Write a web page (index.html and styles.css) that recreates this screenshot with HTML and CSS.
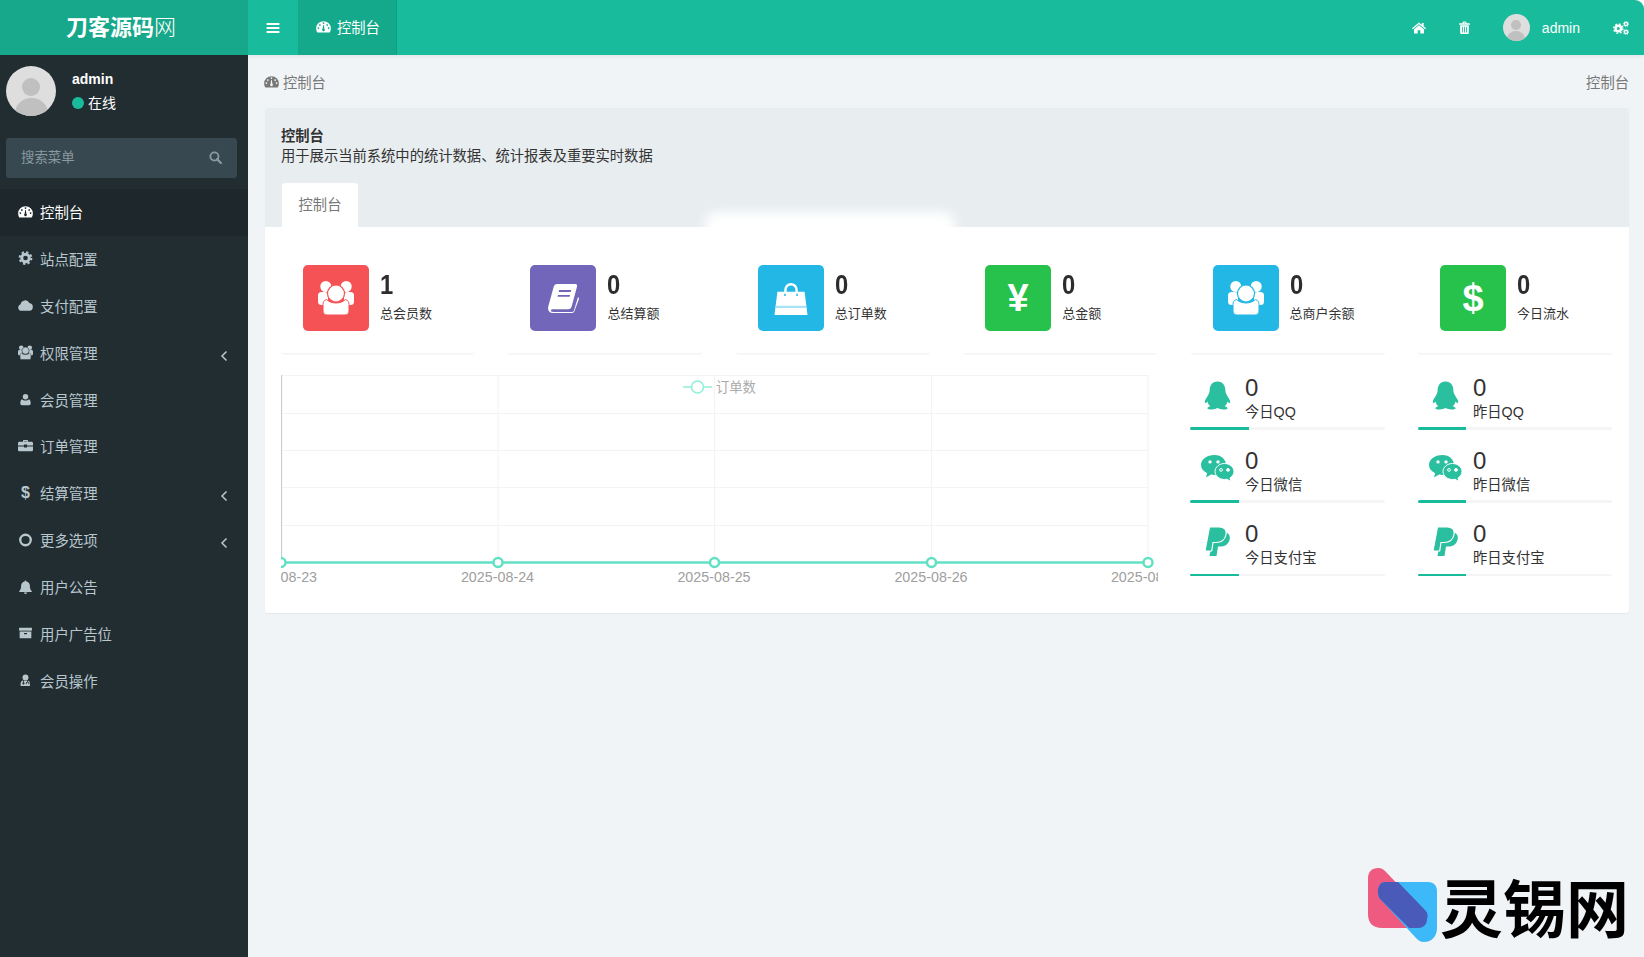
FILE: index.html
```html
<!DOCTYPE html>
<html lang="zh-CN">
<head>
<meta charset="utf-8">
<title>控制台</title>
<link rel="stylesheet" href="styles.css">
</head>
<body>
<svg class="sprite" xmlns="http://www.w3.org/2000/svg">
  <symbol id="i-dash" viewBox="0 0 24 24"><path fill-rule="evenodd" d="M12 3.500A11.800 11.800 0 0 0 .2 15.300c0 2.400.6 4.300 1.600 5.800.2.300.5.500.9.500h18.600c.4 0 .7-.2.900-.5 1-1.500 1.600-3.400 1.600-5.800A11.800 11.800 0 0 0 12 3.500zM6.200 8.500a1.300 1.300 0 1 0 .01 0zM3.800 13.300a1.300 1.300 0 1 0 .01 0zM12 5.200a1.300 1.300 0 1 0 .01 0zM17.800 8.500a1.300 1.300 0 1 0 .01 0zM20.200 13.300a1.300 1.300 0 1 0 .01 0zM10.600 15.600 11.500 9.500h1l.9 6.100a2.200 2.200 0 1 1-2.800 0z"/></symbol>
  <symbol id="i-gear" viewBox="0 0 24 24"><circle cx="12" cy="12" r="6.500" fill="none" stroke="currentColor" stroke-width="5"/><circle cx="12" cy="12" r="10" fill="none" stroke="currentColor" stroke-width="3.600" stroke-dasharray="3.900 3.950"/></symbol>
  <symbol id="i-cloud" viewBox="0 0 24 24"><path d="M5.800 20.500a5.500 5.500 0 0 1-1.700-10.700A7.500 7.500 0 0 1 18.200 8a6.300 6.300 0 0 1 0 12.500z"/></symbol>
  <symbol id="i-users" viewBox="0 0 36 34"><circle cx="7.800" cy="5.500" r="5.500"/><circle cx="28.200" cy="5.500" r="5.500"/><rect x="0" y="11" width="10" height="13" rx="3.500"/><rect x="26" y="11" width="10" height="13" rx="3.500"/><circle cx="18" cy="12.500" r="8.500" stroke="var(--cut,#222d32)" stroke-width="1.200"/><path d="M8.500 18.500c2.500 2.300 5.800 3.500 9.500 3.500s7-1.200 9.500-3.500c2.300.6 3.500 2.500 3.500 5V30c0 2.400-1.600 4-4 4H9c-2.400 0-4-1.600-4-4v-6.500c0-2.500 1.200-4.400 3.500-5z" stroke="var(--cut,#222d32)" stroke-width="1"/></symbol>
  <symbol id="i-user" viewBox="0 0 24 24"><circle cx="12" cy="7" r="5"/><path d="M5.500 11.500c1.500 1.500 3.800 2.500 6.500 2.500s5-1 6.500-2.500c1.800.6 3 3 3 6.500v1.500c0 1.700-1.200 3-3 3h-13c-1.800 0-3-1.300-3-3V18c0-3.500 1.200-5.900 3-6.500z"/></symbol>
  <symbol id="i-brief" viewBox="0 0 24 24"><path fill-rule="evenodd" d="M8 6V4.500C8 3.700 8.700 3 9.500 3h5c.8 0 1.500.7 1.500 1.500V6h5.500C23 6 24 7 24 8.300V12H14.500v-1.500h-5V12H0V8.300C0 7 1 6 2.500 6zm2-1v1h4V5z"/><path d="M0 13.500h9.500V15h5v-1.500H24V19c0 1.200-1 2-2.300 2H2.300C1 21 0 20.200 0 19z"/></symbol>
  <symbol id="i-ring" viewBox="0 0 24 24"><circle cx="12" cy="12" r="9" fill="none" stroke="currentColor" stroke-width="4"/></symbol>
  <symbol id="i-bell" viewBox="0 0 24 24"><path d="M12 1a1.500 1.500 0 0 1 1.500 1.700c3.800.7 6 3.500 6 7.300 0 4.500 1 7.500 3.500 9.500 0 .7-.5 1.200-1.200 1.200H2.200c-.7 0-1.200-.5-1.200-1.200C3.500 17.500 4.500 14.500 4.500 10c0-3.800 2.200-6.600 6-7.300A1.500 1.500 0 0 1 12 1z"/><path d="M9 21.500h6a3 2.500 0 0 1-6 0z"/></symbol>
  <symbol id="i-archive" viewBox="0 0 24 24"><path d="M1 3h22v5H1z"/><path fill-rule="evenodd" d="M2 9.500h20V21H2zm7.500 2.500v2h5v-2z"/></symbol>
  <symbol id="i-md" viewBox="0 0 24 24"><circle cx="12" cy="6.500" r="5.500"/><path fill-rule="evenodd" d="M3 22v-4.500c0-3.300 1.800-5.300 4.500-5.700v3.600a2 2 0 1 0 1.400 0V11.800c2 .7 4.200.7 6.200 0v2.300c-1.600.4-2.600 1.800-2.600 3.900v1h1.400v-1c0-1.400.7-2.500 1.900-2.500s1.900 1.100 1.900 2.500v1h1.400v-1c0-2.100-1-3.500-2.600-3.900v-2.300c2.300.6 3.700 2.500 3.700 5.700V22z"/></symbol>
  <symbol id="i-home" viewBox="0 0 24 24"><path d="M12 2.500 0 12.500l1.400 1.700L12 5.400l10.600 8.800 1.400-1.700-4-3.300V3.500h-3v2.900z"/><path d="M12 7.200 3.500 14.300v6.200c0 .6.400 1 1 1h5.300v-5.800h4.400v5.800h5.300c.6 0 1-.4 1-1v-6.200z"/></symbol>
  <symbol id="i-trash" viewBox="0 0 24 24"><path fill-rule="evenodd" d="M8 4 9.500 1h5L16 4h5c.6 0 1 .4 1 1v2H2V5c0-.6.4-1 1-1zm2.300 0h3.400l-.6-1.300h-2.200z"/><path fill-rule="evenodd" d="M4 8h16v13c0 1.700-1 3-2.500 3h-11C5 24 4 22.700 4 21zm3.500 2.500v10.500h1.500V10.500zm3.700 0v10.500h1.600V10.500zm3.800 0v10.500h1.500V10.500z"/></symbol>
  <symbol id="i-cogs" viewBox="0 0 16 14"><circle cx="5.300" cy="7.600" r="2.750" fill="none" stroke="currentColor" stroke-width="2.500"/><circle cx="5.300" cy="7.600" r="4.600" fill="none" stroke="currentColor" stroke-width="1.400" stroke-dasharray="1.800 1.810"/><circle cx="13" cy="3" r="1.600" fill="none" stroke="currentColor" stroke-width="1.400"/><circle cx="13" cy="3" r="2.700" fill="none" stroke="currentColor" stroke-width=".8" stroke-dasharray="1.060 1.060"/><circle cx="13" cy="11" r="1.600" fill="none" stroke="currentColor" stroke-width="1.400"/><circle cx="13" cy="11" r="2.700" fill="none" stroke="currentColor" stroke-width=".8" stroke-dasharray="1.060 1.060"/></symbol>
  <symbol id="i-bars" viewBox="0 0 24 24"><path d="M1 3.500h22v3.300H1zM1 10.400h22v3.300H1zM1 17.200h22v3.300H1z"/></symbol>
  <symbol id="i-search" viewBox="0 0 24 24"><circle cx="10" cy="10" r="7.500" fill="none" stroke="currentColor" stroke-width="3.400"/><path d="m15 15 7 7" stroke="currentColor" stroke-width="4" stroke-linecap="round"/></symbol>
  <symbol id="i-angle" viewBox="0 0 8 12"><path d="M6.500 1.500 2 6l4.500 4.500" fill="none" stroke="currentColor" stroke-width="1.500"/></symbol>
  <symbol id="i-book" viewBox="0 0 32 30"><path fill-rule="evenodd" d="M9.500 0H28c1.600 0 2.400 1 2 2.500L24.500 23c-.6 2-1.600 3-3.500 3H5c-1.700 0-2.300 1-2 1.800.3.900 1.200 1.200 2.400 1.200H25c1 0 1.500-.6 1.800-1.500L31 13.500l.7.700c.4.500.4 1 .2 1.700L27.400 28c-.4 1.200-1.400 2-2.900 2H5C2 30 0 28 0 25c0-.8.200-1.500.4-2.300L5.800 3C6.300 1.200 7.600 0 9.500 0zm2 6.300-.5 2h12.500l.5-2zm-1.200 5-.5 2h12.500l.5-2z"/></symbol>
  <symbol id="i-bag" viewBox="0 0 34 34"><path fill-rule="evenodd" d="M10 10V8a7 7 0 0 1 14 0v2h7l3 24H0l3-24zm2.500 0h9V8a4.500 4.500 0 0 0-9 0zM10 12v2.500h1.500V12zm12.500 0v2.500H24V12z"/><path d="M1.600 24.500h30.800l.2 2.300H1.400z" fill="#a8e4f7"/></symbol>
  <symbol id="i-qq" viewBox="0 0 24 24"><path d="M12 .5C7.500.5 5.500 4 5.500 7.700c0 1.500-.5 2.600-1.300 4.100C3 14 1.300 16 1.500 17.600c.1.900 1 .7 2.200-.7.400 1.700 1.200 3 2.300 3.900-1.500.5-2.400 1-2.400 1.700 0 .8 1.500 1 3.600 1 2 0 3.500-.5 4-1h1.600c.5.500 2 1 4 1 2.100 0 3.600-.2 3.600-1 0-.7-.9-1.200-2.400-1.700 1.100-.9 1.900-2.200 2.300-3.900 1.200 1.400 2.100 1.600 2.200.7.200-1.600-1.500-3.600-2.700-5.800-.8-1.500-1.300-2.600-1.300-4.100C18.500 4 16.500.5 12 .5z"/></symbol>
  <symbol id="i-wechat" viewBox="0 0 33 27"><path fill-rule="evenodd" d="M13.500 0C20.500 0 25 4.600 25 10c0 5.500-5 10-11.500 10-1.200 0-2.300-.2-3.400-.4L5 22.500l1.200-4.300C2.300 16.300 0 13.400 0 10 0 4.500 5.500 0 13.500 0zM9 5.200a1.700 1.700 0 1 0 0 3.400 1.700 1.700 0 0 0 0-3.400zm8 0a1.700 1.700 0 1 0 0 3.400 1.700 1.700 0 0 0 0-3.400z"/><path fill-rule="evenodd" stroke="#fff" stroke-width="1" d="M23.500 8.500c5.200 0 9.500 3.600 9.500 8 0 2.700-1.600 5-4 6.500l1 3.500-4.200-2.300c-.7.200-1.500.3-2.300.3-5.200 0-9.500-3.600-9.500-8s4.300-8 9.500-8zm-3.500 5a1.400 1.400 0 1 0 0 2.800 1.400 1.400 0 0 0 0-2.800zm7 0a1.400 1.400 0 1 0 0 2.800 1.400 1.400 0 0 0 0-2.800z"/></symbol>
  <symbol id="i-paypal" viewBox="0 0 25 29"><path d="M9 5h9c4.500 0 7.500 2.500 6.700 7-.8 5-4.700 7.500-9 7.500H13L11.500 29H4.500z"/><path stroke="#fff" stroke-width="1.200" d="M4.500 0H14c5 0 8 2.600 7 7.500-1 5.500-5 8-10 8H8L6.700 24H0z"/></symbol>
</svg>

<div class="app">
  <header class="topbar">
    <div class="brand"><b>刀客源码</b>网</div>
    <button class="toggle" type="button"><svg class="ico ico-14"><use href="#i-bars"/></svg></button>
    <div class="navtab"><svg class="ico ico-15"><use href="#i-dash"/></svg><span>控制台</span></div>
    <div class="topright">
      <svg class="ico ico-14"><use href="#i-home"/></svg>
      <svg class="ico ico-13 trash"><use href="#i-trash"/></svg>
      <span class="avatar avatar-sm"><i class="av-head"></i><i class="av-body"></i></span>
      <span class="topname">admin</span>
      <svg class="ico ico-16 cogs"><use href="#i-cogs"/></svg>
    </div>
  </header>

  <div class="main">
    <aside class="sidebar">
      <div class="userpanel">
        <span class="avatar"><i class="av-head"></i><i class="av-body"></i></span>
        <div class="userinfo">
          <div class="username">admin</div>
          <div class="userstatus"><i class="dot"></i>在线</div>
        </div>
      </div>
      <div class="searchbox"><span>搜索菜单</span><svg class="ico ico-13"><use href="#i-search"/></svg></div>
      <nav class="menu">
        <a class="item active"><svg class="ico ico-15"><use href="#i-dash"/></svg><span>控制台</span></a>
        <a class="item"><svg class="ico ico-14"><use href="#i-gear"/></svg><span>站点配置</span></a>
        <a class="item"><svg class="ico ico-15"><use href="#i-cloud"/></svg><span>支付配置</span></a>
        <a class="item has-sub"><svg class="ico ico-15"><use href="#i-users"/></svg><span>权限管理</span><svg class="angle"><use href="#i-angle"/></svg></a>
        <a class="item"><svg class="ico ico-13"><use href="#i-user"/></svg><span>会员管理</span></a>
        <a class="item"><svg class="ico ico-15"><use href="#i-brief"/></svg><span>订单管理</span></a>
        <a class="item has-sub"><b class="ico-dollar">$</b><span>结算管理</span><svg class="angle"><use href="#i-angle"/></svg></a>
        <a class="item has-sub"><svg class="ico ico-14"><use href="#i-ring"/></svg><span>更多选项</span><svg class="angle"><use href="#i-angle"/></svg></a>
        <a class="item"><svg class="ico ico-14"><use href="#i-bell"/></svg><span>用户公告</span></a>
        <a class="item"><svg class="ico ico-14"><use href="#i-archive"/></svg><span>用户广告位</span></a>
        <a class="item"><svg class="ico ico-13"><use href="#i-md"/></svg><span>会员操作</span></a>
      </nav>
    </aside>

    <main class="content">
      <div class="crumbs">
        <div class="crumb-left"><svg class="ico ico-15"><use href="#i-dash"/></svg><span>控制台</span></div>
        <div>控制台</div>
      </div>
      <section class="panel">
        <div class="panel-head">
          <div class="title">控制台</div>
          <div class="desc">用于展示当前系统中的统计数据、统计报表及重要实时数据</div>
          <div class="tab">控制台</div>
        </div>
        <div class="smudge"></div>
        <div class="panel-body">
          <div class="stats">
            <div class="stat"><div class="box red"><svg class="boxicon users"><use href="#i-users"/></svg></div><div class="stat-text"><div class="num">1</div><div class="lbl">总会员数</div></div></div>
            <div class="stat"><div class="box purple"><svg class="boxicon book"><use href="#i-book"/></svg></div><div class="stat-text"><div class="num">0</div><div class="lbl">总结算额</div></div></div>
            <div class="stat"><div class="box cyan"><svg class="boxicon bag"><use href="#i-bag"/></svg></div><div class="stat-text"><div class="num">0</div><div class="lbl">总订单数</div></div></div>
            <div class="stat"><div class="box green"><b class="boxglyph">¥</b></div><div class="stat-text"><div class="num">0</div><div class="lbl">总金额</div></div></div>
            <div class="stat"><div class="box cyan"><svg class="boxicon users"><use href="#i-users"/></svg></div><div class="stat-text"><div class="num">0</div><div class="lbl">总商户余额</div></div></div>
            <div class="stat"><div class="box green"><b class="boxglyph">$</b></div><div class="stat-text"><div class="num">0</div><div class="lbl">今日流水</div></div></div>
          </div>
          <div class="lower">
            <svg class="chart" width="877" height="215" viewBox="0 0 877 215">
              <g class="grid">
                <path d="M0 5.500H867M0 43.500H867M0 80.500H867M0 117.500H867M0 155.500H867"/>
                <path d="M217 5V192M433.500 5V192M650.500 5V192M867 5V192"/>
              </g>
              <path class="yaxis" d="M.5 5V192"/>
              <path class="series" d="M0 192.500H867"/>
              <g class="pts">
                <circle cx="0" cy="192.500" r="4.500"/><circle cx="217" cy="192.500" r="4.500"/><circle cx="433.500" cy="192.500" r="4.500"/><circle cx="650.500" cy="192.500" r="4.500"/><circle cx="867" cy="192.500" r="4.500"/>
              </g>
              <g class="xlabels">
                <text x="-.5" y="211.500">2025-08-23</text><text x="216.500" y="211.500">2025-08-24</text><text x="433" y="211.500">2025-08-25</text><text x="650" y="211.500">2025-08-26</text><text x="866.500" y="211.500">2025-08-27</text>
              </g>
              <path class="legend-line" d="M402 17H431"/>
              <circle class="legend-pt" cx="416.500" cy="17" r="6"/>
              <text class="legend-text" x="435" y="22">订单数</text>
            </svg>
            <div class="minis">
              <div class="mini"><div class="mini-row"><div class="mini-ico"><svg class="qq"><use href="#i-qq"/></svg></div><div><div class="mini-num">0</div><div class="mini-lbl">今日QQ</div></div></div><div class="bar"><i class="fill w59"></i></div></div>
              <div class="mini"><div class="mini-row"><div class="mini-ico"><svg class="qq"><use href="#i-qq"/></svg></div><div><div class="mini-num">0</div><div class="mini-lbl">昨日QQ</div></div></div><div class="bar"><i class="fill w48"></i></div></div>
              <div class="mini"><div class="mini-row"><div class="mini-ico"><svg class="wx"><use href="#i-wechat"/></svg></div><div><div class="mini-num">0</div><div class="mini-lbl">今日微信</div></div></div><div class="bar"><i class="fill w49"></i></div></div>
              <div class="mini"><div class="mini-row"><div class="mini-ico"><svg class="wx"><use href="#i-wechat"/></svg></div><div><div class="mini-num">0</div><div class="mini-lbl">昨日微信</div></div></div><div class="bar"><i class="fill w48"></i></div></div>
              <div class="mini"><div class="mini-row"><div class="mini-ico"><svg class="pp"><use href="#i-paypal"/></svg></div><div><div class="mini-num">0</div><div class="mini-lbl">今日支付宝</div></div></div><div class="bar thin"><i class="fill w49"></i></div></div>
              <div class="mini"><div class="mini-row"><div class="mini-ico"><svg class="pp"><use href="#i-paypal"/></svg></div><div><div class="mini-num">0</div><div class="mini-lbl">昨日支付宝</div></div></div><div class="bar thin"><i class="fill w48"></i></div></div>
            </div>
          </div>
        </div>
      </section>
    </main>
  </div>

  <div class="watermark">
    <svg class="wm-logo" viewBox="0 0 69 74"><path fill="#ee5a80" d="M10 0c4 0 6 2 8 4l40 42v14H14C5 60 0 55 0 46V10C0 4 4 0 10 0z"/><path fill="#3db9fa" d="M17 14h43c6 0 9 4 9 9v37c0 8-5 14-13 14-4 0-6-2-8-4L13 32C8 27 9 14 17 14z"/><path fill="#4a5ab8" d="M17 14h13l27 28c3 3 3 6 2 9 0 6-4 9-9 9h-9L13 32C8 27 9 14 17 14z"/></svg>
    <span class="wm-text">灵锡网</span>
  </div>
</div>
</body>
</html>
```

FILE: styles.css
```css
* { box-sizing: border-box; }
html, body { margin: 0; padding: 0; height: 100%; background: #fff; }
body {
  font-family: "Liberation Sans", "Noto Sans CJK SC", sans-serif;
  font-size: 14px;
  color: #333;
  overflow: hidden;
}
.sprite { position: absolute; width: 0; height: 0; overflow: hidden; }
.ico { display: block; fill: currentColor; flex: none; }
.ico-13 { width: 13px; height: 13px; }
.ico-14 { width: 14px; height: 14px; }
.ico-15 { width: 15px; height: 15px; }
.ico-16 { width: 16px; height: 14px; }

.app { position: relative; height: 957px; display: flex; flex-direction: column; }

/* top bar */
.topbar {
  height: 55px;
  flex: none;
  display: flex;
  align-items: stretch;
  background: #18bc9c;
  color: #fff;
  border-top-right-radius: 9px;
  box-shadow: 0 1px 4px rgba(0,0,0,.08);
  position: relative;
  z-index: 2;
}
.brand {
  width: 248px;
  flex: none;
  background: #17a88b;
  text-align: center;
  font-size: 22px;
  line-height: 56px;
  padding-right: 6px;
  font-weight: 300;
}
.brand b { font-weight: 700; }
.toggle {
  width: 50px;
  flex: none;
  border: 0;
  padding: 0 0 0 18px;
  background: transparent;
  color: #fff;
  display: flex;
  align-items: center;
}
.navtab {
  width: 99px;
  flex: none;
  background: #15a98c;
  border-right: 1px solid #14a085;
  display: flex;
  align-items: center;
  gap: 6px;
  padding: 0 0 2px 18px;
  font-size: 14.300px;
}
.topright { margin-left: auto; display: flex; align-items: center; padding-right: 15px; }
.topright .ico-14 { margin-right: 1px; }
.trash { margin-left: 31px; }
.avatar-sm { margin-left: 32px; }
.topname { margin-left: 12px; }
.cogs { margin-left: 33px; }

.avatar {
  width: 50px;
  height: 50px;
  border-radius: 50%;
  background: #dedede;
  position: relative;
  overflow: hidden;
  display: block;
  flex: none;
}
.avatar-sm { width: 27px; height: 27px; }
.av-head { position: absolute; left: 32%; top: 24%; width: 36%; height: 36%; border-radius: 50%; background: #c0c0c0; }
.av-body { position: absolute; left: 17%; top: 64%; width: 66%; height: 60%; border-radius: 50%; background: #c0c0c0; }

.main { flex: 1; display: flex; min-height: 0; }

/* sidebar */
.sidebar { width: 248px; flex: none; background: #222d32; color: #b8c7ce; }
.userpanel { display: flex; padding: 11px 6px 0; height: 83px; }
.userinfo { margin-left: 16px; padding-top: 3px; color: #fff; }
.username { font-weight: 700; line-height: 20px; }
.userstatus { display: flex; align-items: center; line-height: 20px; margin-top: 4px; gap: 4px; }
.dot { width: 12px; height: 12px; border-radius: 50%; background: #18bc9c; }
.searchbox {
  margin: 0 11px 0 6px;
  height: 40px;
  background: #374850;
  border-radius: 3px;
  display: flex;
  align-items: center;
  justify-content: space-between;
  padding: 0 15px;
  color: #8a9aa1;
  font-size: 13.400px;
}
.searchbox span { margin-bottom: 4px; }
.searchbox .ico { margin-bottom: 2px; }
.menu { margin-top: 11px; }
.item { height: 46.900px; display: flex; align-items: center; padding: 0 0 2px 18px; gap: 7px; position: relative; font-size: 14.400px; }
.item .ico { width: 15px; }
.item.active { background: #1e282c; color: #fff; --cut: #1e282c; }
.ico-dollar { width: 15px; text-align: center; font-size: 16px; line-height: 1; }
.angle { position: absolute; right: 20px; top: 20px; width: 8px; height: 12px; }

/* content */
.content { flex: 1; min-width: 0; background: #f1f4f6; padding: 0 15px 0 17px; }
.crumbs {
  height: 53px;
  padding: 0 0 1px;
  display: flex;
  align-items: center;
  justify-content: space-between;
  color: #777;
  font-size: 14.300px;
}
.crumb-left { display: flex; align-items: center; gap: 4px; margin-left: -1px; }
.panel { position: relative; height: 505px; background: #fff; border-radius: 3px; box-shadow: 0 1px 1px rgba(0,0,0,.05); overflow: hidden; }
.panel-head { height: 119px; background: #e8edf0; padding: 18px 16px 0; font-size: 14.300px; }
.title { font-weight: 700; line-height: 20px; }
.desc { line-height: 20px; }
.tab {
  width: 76px;
  height: 44px;
  margin: 17px 0 0 1px;
  background: #fff;
  border-radius: 3px 3px 0 0;
  color: #777;
  line-height: 44px;
  text-align: center;
}
.smudge {
  position: absolute;
  left: 440px;
  top: 104px;
  width: 250px;
  height: 36px;
  background: #fff;
  border-radius: 12px;
  filter: blur(6px);
}
.panel-body { position: relative; padding-left: 16px; }

.stats { display: grid; grid-template-columns: repeat(6, 194px); column-gap: 33.400px; }
.stat {
  height: 127px;
  padding: 38px 0 0 22px;
  display: flex;
  border-bottom: 1px solid #f3f4f6;
  border-radius: 0 0 3px 3px;
  box-shadow: 0 1px 1px rgba(0,0,0,.03);
}
.box {
  width: 66px;
  height: 66px;
  border-radius: 5px;
  display: flex;
  align-items: center;
  justify-content: center;
  color: #fff;
  flex: none;
}
.red { background: #f45255; --cut: #f45255; }
.purple { background: #7266ba; }
.cyan { background: #23b7e5; --cut: #23b7e5; }
.green { background: #27c24c; }
.boxicon { fill: #fff; }
.users { width: 36px; height: 34px; }
.book { width: 31px; height: 29px; }
.bag { width: 34px; height: 33px; }
.boxglyph { font-size: 38px; line-height: 1; }
.stat-text { margin-left: 11px; }
.num { font-size: 28px; font-weight: 700; line-height: 40px; color: #2d2d2d; transform: scaleX(.85); transform-origin: left center; }
.lbl { font-size: 13px; line-height: 20px; margin-top: -1px; color: #333; }

.lower { display: flex; margin-top: 16px; }
.chart { display: block; flex: none; overflow: hidden; }
.grid path { stroke: #f3f3f3; stroke-width: 1.200; fill: none; }
.yaxis { stroke: #ccc; stroke-width: 1.200; fill: none; }
.series { stroke: #61e0c4; stroke-width: 2.500; fill: none; }
.pts circle { fill: #fff; stroke: #61e0c4; stroke-width: 2.500; }
.xlabels text { font-size: 14.300px; fill: #a0a0a0; text-anchor: middle; }
.legend-line { stroke: #8eefd8; stroke-width: 1.500; fill: none; }
.legend-pt { fill: #fff; stroke: #8eefd8; stroke-width: 1.500; }
.legend-text { font-size: 13.300px; fill: #aaa; }

.minis { margin-left: 32px; display: grid; grid-template-columns: 195px 194px; column-gap: 33px; align-content: start; }
.mini { height: 73px; }
.mini-row { display: flex; height: 57px; }
.mini-ico { width: 55px; height: 50px; display: flex; align-items: center; justify-content: center; flex: none; }
.mini-ico svg { fill: #2abf9e; display: block; }
.qq { width: 29px; height: 29px; }
.wx { width: 33px; height: 27px; }
.pp { width: 25px; height: 29px; }
.mini-num { font-size: 24px; line-height: 36px; margin-bottom: -2px; color: #333; }
.mini-lbl { font-size: 14.300px; line-height: 17px; color: #333; }
.bar { height: 3px; background: #f5f5f5; border-radius: 2px; overflow: hidden; }
.bar.thin { height: 2px; margin-top: 1px; }
.fill { display: block; height: 100%; background: #18bc9c; }
.w59 { width: 59px; }
.w49 { width: 49px; }
.w48 { width: 48px; }

/* watermark */
.watermark { position: absolute; left: 1368px; top: 868px; display: flex; align-items: flex-start; color: #000; }
.wm-logo { width: 69px; height: 74px; display: block; }
.wm-text { font-family: "Noto Sans CJK SC", sans-serif; font-weight: 700; font-size: 63px; line-height: 74px; margin-left: 3px; white-space: nowrap; }
```
